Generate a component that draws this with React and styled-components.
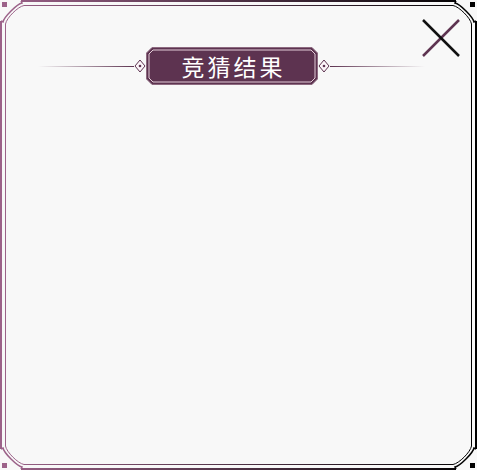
import React from 'react'
import styled, { createGlobalStyle } from 'styled-components'

const plum = '#5d3350'
const mauve = '#9c6289'

const GlobalStyle = createGlobalStyle`
  html, body {
    margin: 0;
    padding: 0;
    background: #f8f8f8;
  }
`

const Panel = styled.div`
  position: relative;
  width: 477px;
  height: 470px;
  box-sizing: border-box;
  background: #f8f8f8;
  padding: 47px 52px 0 38px;
  font-family: "Noto Sans CJK SC", "Noto Sans", sans-serif;
`

const FrameArt = styled.svg`
  position: absolute;
  inset: 0;
  pointer-events: none;
`

const Header = styled.div`
  display: flex;
  align-items: center;
  height: 38px;
`

const Rule = styled.div`
  flex: 1;
  height: 1px;
  background: linear-gradient(${p => (p.$side === 'left' ? 'to right' : 'to left')}, rgba(93, 51, 80, 0), ${plum});
`

const Diamond = styled.svg`
  flex: none;
  display: block;
`

const Banner = styled.div`
  position: relative;
  flex: none;
  width: 172px;
  height: 38px;
  display: flex;
  align-items: center;
  justify-content: center;
`

const BannerArt = styled.svg`
  position: absolute;
  inset: 0;
`

const Title = styled.span`
  position: relative;
  color: #ffffff;
  font-size: 23px;
  letter-spacing: 3px;
  padding-left: 4px;
  line-height: 1;
`

const CloseButton = styled.button`
  position: absolute;
  top: 19px;
  right: 17px;
  width: 38px;
  height: 38px;
  padding: 0;
  border: none;
  background: transparent;
  cursor: pointer;

  svg {
    display: block;
  }
`

const Corner = ({ color, transform }) => (
  <g transform={transform} stroke={color} fill="none">
    <rect x="2" y="2" width="5" height="5" fill={color} stroke="none" />
    <path d="M 21 1 L 22 3 C 17 4, 4 17, 3 22 L 1 21" strokeWidth="1.5" />
    <path d="M 24 5.5 C 18 6.5, 6.5 18, 5.5 24" strokeWidth="1" />
  </g>
)

const Frame = () => (
  <FrameArt width="477" height="470" viewBox="0 0 477 470">
    <defs>
      <linearGradient id="edge" gradientUnits="userSpaceOnUse" x1="0" y1="0" x2="477" y2="0">
        <stop offset="0" stopColor={mauve} />
        <stop offset="1" stopColor="#000000" />
      </linearGradient>
    </defs>
    <g stroke="url(#edge)" fill="none">
      <line x1="21" y1="1" x2="456" y2="1" strokeWidth="2" />
      <line x1="24" y1="5.5" x2="453" y2="5.5" strokeWidth="1" />
      <line x1="21" y1="469" x2="456" y2="469" strokeWidth="2" />
      <line x1="24" y1="464.5" x2="453" y2="464.5" strokeWidth="1" />
    </g>
    <g stroke={mauve}>
      <line x1="1" y1="21" x2="1" y2="449" strokeWidth="2" />
      <line x1="5.5" y1="24" x2="5.5" y2="446" strokeWidth="1" />
    </g>
    <g stroke="#000">
      <line x1="476" y1="21" x2="476" y2="449" strokeWidth="2" />
      <line x1="471.5" y1="24" x2="471.5" y2="446" strokeWidth="1" />
    </g>
    <Corner color={mauve} transform="" />
    <Corner color="#000" transform="translate(477,0) scale(-1,1)" />
    <Corner color="#000" transform="translate(477,470) scale(-1,-1)" />
    <Corner color={mauve} transform="translate(0,470) scale(1,-1)" />
  </FrameArt>
)

const Tip = ({ flip }) => (
  <Diamond width="12" height="16" viewBox="0 0 12 16">
    <g transform={flip ? 'translate(12,0) scale(-1,1)' : ''}>
      <polygon points="1,8 6,2 11,8 6,14" fill="#fbf4f8" stroke={plum} strokeWidth="1" />
      <circle cx="6" cy="8" r="1.3" fill={plum} />
    </g>
  </Diamond>
)

export default function App() {
  return (
    <>
      <GlobalStyle />
      <Panel>
        <Frame />
        <Header>
          <Rule $side="left" />
          <Tip />
          <Banner>
            <BannerArt width="172" height="38" viewBox="0 0 172 38">
              <polygon
                points="6,0.5 166,0.5 171.5,6 171.5,32 166,37.5 6,37.5 0.5,32 0.5,6"
                fill={plum}
                stroke="#8d6a80"
                strokeWidth="1"
              />
              <polygon
                points="7,3 165,3 169,7 169,31 165,35 7,35 3,31 3,7"
                fill="none"
                stroke="#e4cdd8"
                strokeWidth="1"
              />
            </BannerArt>
            <Title>竞猜结果</Title>
          </Banner>
          <Tip flip />
          <Rule $side="right" />
        </Header>
        <CloseButton aria-label="关闭">
          <svg width="38" height="38" viewBox="0 0 38 38">
            <line x1="37" y1="1" x2="1" y2="37" stroke={plum} strokeWidth="2.5" />
            <line x1="1" y1="1" x2="37" y2="37" stroke="#111" strokeWidth="2.5" />
          </svg>
        </CloseButton>
      </Panel>
    </>
  )
}
